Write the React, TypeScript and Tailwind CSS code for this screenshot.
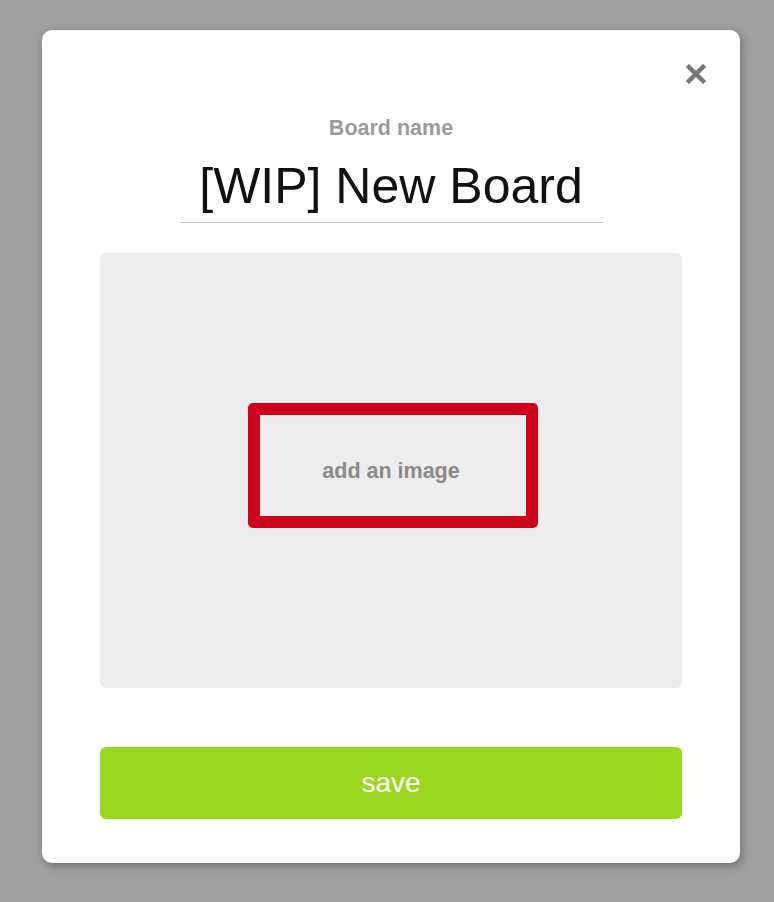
import React from "react";

export default function App() {
  return (
    <div
      className="w-[774px] h-[902px] bg-[#a0a0a0] pt-[30px] pl-[42px] overflow-hidden"
      style={{ fontFamily: '"Liberation Sans", Arial, sans-serif' }}
    >
      <div className="relative w-[698px] h-[833px] bg-white rounded-[10px] shadow-[2px_3px_10px_rgba(0,0,0,0.3)] flex flex-col px-[58px] pt-[85px]">
        <button className="absolute top-[34px] right-[34px] w-[20px] h-[20px] flex items-center justify-center">
          <svg width="20" height="20" viewBox="0 0 20 20">
            <path d="M3 3 L17 17 M17 3 L3 17" stroke="#777777" strokeWidth="4.5" strokeLinecap="square" />
          </svg>
        </button>
        <div className="text-center text-[21.5px] leading-[26px] font-bold text-[#9b9b9b]">Board name</div>
        <div className="mt-[16px] self-center w-[423px] text-center text-[50px] leading-[58px] text-[#111111] pb-[7px] border-b border-[#c8c8c8]">
          [WIP] New Board
        </div>
        <div className="relative mt-[30px] h-[435px] bg-[#ededed] rounded-[6px] flex items-center justify-center">
          <span className="text-[21.5px] font-bold text-[#8a8a8a] leading-[26px]">add an image</span>
          <div className="absolute left-[148px] top-[150px] w-[290px] h-[125px] border-[12px] border-[#d0021b] rounded-[5px]" />
        </div>
        <button className="mt-[59px] h-[72px] rounded-[6px] bg-[#9ad81f] text-white text-[28px] flex items-center justify-center">
          save
        </button>
      </div>
    </div>
  );
}
